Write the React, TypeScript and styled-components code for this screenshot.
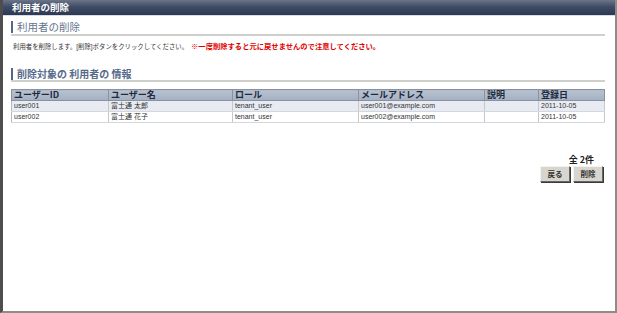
import React from "react";
import styled, { createGlobalStyle } from "styled-components";

const Global = createGlobalStyle`
  html, body { margin: 0; padding: 0; background: #fff; }
  body { font-family: "Noto Sans CJK JP", "Noto Sans", sans-serif; }
`;

const Frame = styled.div`
  width: 617px;
  height: 313px;
  box-sizing: border-box;
  border-left: 3px solid #4e4e4e;
  border-right: 2px solid #8c8c8c;
  border-bottom: 2px solid #8c8c8c;
  display: flex;
  flex-direction: column;
  background: #fff;
`;

const TitleBar = styled.div`
  height: 15px;
  background: linear-gradient(#6c7488 0%, #404b66 45%, #2d3853 100%);
  color: #fff;
  font-size: 9.5px;
  font-weight: bold;
  line-height: 15px;
  padding-left: 9px;
  border-bottom: 1px solid #d8dce4;
`;

const Content = styled.div`
  padding: 0 10px 0 8px;
  display: flex;
  flex-direction: column;
`;

const Heading = styled.div<{ $mt: number; $pb: number }>`
  margin-top: ${(p) => p.$mt}px;
  border-bottom: 2px solid #cfd0cc;
  padding-bottom: ${(p) => p.$pb}px;
  display: flex;
  align-items: center;
`;

const HeadingText = styled.span<{ $size: number; $bold?: boolean }>`
  border-left: 2px solid #56688a;
  padding-left: 4px;
  font-size: ${(p) => p.$size}px;
  line-height: 12px;
  color: ${(p) => (p.$bold ? "#56698a" : "#66758e")};
  font-weight: ${(p) => (p.$bold ? "bold" : "normal")};
`;

const Desc = styled.div`
  margin-top: 5px;
  padding-left: 2px;
  font-family: "Liberation Sans", "Noto Sans CJK JP", sans-serif;
  font-size: 6.4px;
  line-height: 12px;
  height: 12px;
  color: #333;
  white-space: nowrap;
`;

const Warn = styled.span`
  color: #e00000;
  font-weight: bold;
  font-size: 7.3px;
  line-height: 12px;
  margin-left: 3px;
`;

const Table = styled.table`
  margin-top: 7px;
  width: 594px;
  border-collapse: collapse;
  border: 1px solid #b4bac4;
  table-layout: fixed;
`;

const Th = styled.th<{ $w?: number }>`
  ${(p) => (p.$w ? `width: ${p.$w - 5}px;` : "")}
  background: linear-gradient(#b8c2d0, #a4b0c2);
  border: 1px solid #8892a2;
  text-align: left;
  font-size: 9px;
  font-weight: bold;
  color: #1e2a3c;
  height: 10px;
  line-height: 10px;
  padding: 0 2px;
  white-space: nowrap;
  overflow: hidden;
`;

const Tr = styled.tr<{ $alt: boolean }>`
  background: ${(p) => (p.$alt ? "#e8ecf2" : "#ffffff")};
`;

const Td = styled.td`
  border-right: 1px solid #c4c8d0;
  border-bottom: 1px solid #d4d8de;
  font-family: "Liberation Sans", "Noto Sans CJK JP", sans-serif;
  font-size: 7px;
  color: #333;
  height: 10px;
  line-height: 10px;
  padding: 0 2px;
  white-space: nowrap;
  overflow: hidden;
`;

const Footer = styled.div`
  margin-top: 32px;
  display: flex;
  flex-direction: column;
  align-items: flex-end;
`;

const Count = styled.div`
  font-size: 9px;
  font-weight: bold;
  color: #222;
  line-height: 10px;
  margin-right: 11px;
`;

const Buttons = styled.div`
  margin-top: 1px;
  display: flex;
  gap: 3px;
  margin-right: 2px;
`;

const Button = styled.button`
  width: 30px;
  height: 16px;
  padding: 0;
  background: #d8d4ce;
  border: 1px solid;
  border-color: #f4f2ee #6a6660 #6a6660 #f4f2ee;
  box-shadow: 1px 1px 0 #3a3a3a;
  font-family: inherit;
  font-size: 7.5px;
  font-weight: bold;
  color: #333;
  line-height: 14px;
`;

const cols = [
  { label: "ユーザーID", w: 97 },
  { label: "ユーザー名", w: 124 },
  { label: "ロール", w: 126 },
  { label: "メールアドレス", w: 126 },
  { label: "説明", w: 54 },
  { label: "登録日" },
];

const rows = [
  ["user001", "富士通 太郎", "tenant_user", "user001@example.com", "", "2011-10-05"],
  ["user002", "富士通 花子", "tenant_user", "user002@example.com", "", "2011-10-05"],
];

export default function App() {
  return (
    <>
      <Global />
      <Frame>
        <TitleBar>利用者の削除</TitleBar>
        <Content>
          <Heading $mt={5} $pb={1}>
            <HeadingText $size={10.5}>利用者の削除</HeadingText>
          </Heading>
          <Desc>
            利用者を削除します。[削除]ボタンをクリックしてください。
            <Warn>※一度削除すると元に戻せませんので注意してください。</Warn>
          </Desc>
          <Heading $mt={15} $pb={0}>
            <HeadingText $size={10} $bold>削除対象の 利用者の 情報</HeadingText>
          </Heading>
          <Table>
            <thead>
              <tr>
                {cols.map((c) => (
                  <Th key={c.label} $w={c.w}>{c.label}</Th>
                ))}
              </tr>
            </thead>
            <tbody>
              {rows.map((r, i) => (
                <Tr key={i} $alt={i === 0}>
                  {r.map((v, j) => (
                    <Td key={j}>{v}</Td>
                  ))}
                </Tr>
              ))}
            </tbody>
          </Table>
          <Footer>
            <Count>全 2件</Count>
            <Buttons>
              <Button>戻る</Button>
              <Button>削除</Button>
            </Buttons>
          </Footer>
        </Content>
      </Frame>
    </>
  );
}
